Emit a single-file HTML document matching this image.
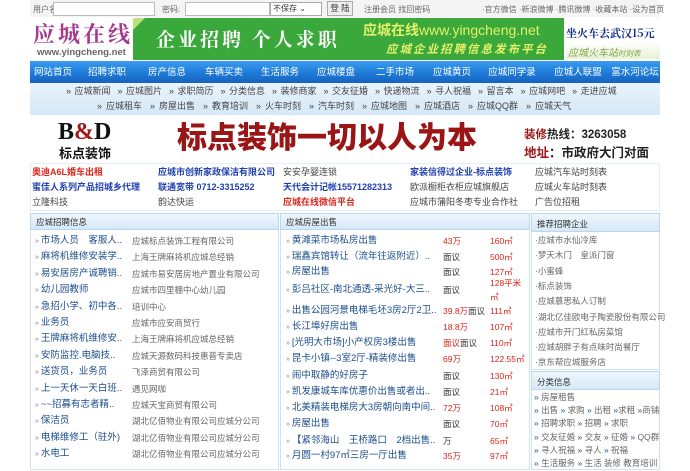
<!DOCTYPE html>
<html><head><meta charset="utf-8"><style>
*{margin:0;padding:0;box-sizing:border-box}
body{width:690px;height:468px;overflow:hidden;background:#fff;font-family:"Liberation Sans","Noto Sans CJK SC",sans-serif;font-size:9px;color:#333;position:relative}
.a{position:absolute;white-space:nowrap}
.bl{color:#1d4e8c}.gr{color:#666}.rd{color:#d9261c}
.row{position:absolute;height:16px;line-height:16px;white-space:nowrap;font-size:9.5px}
.hd{position:absolute;background:linear-gradient(#eef6fd,#d6e8f7);border:1px solid #bcd8ee;height:17px;line-height:16px;font-size:8.5px;color:#333;padding-left:5px}
.box{position:absolute;border:1px solid #cfe2f2;border-top:none}
.nav span{display:inline-block;text-align:center;color:#fff;font-size:9.5px}
</style></head><body>
<div class="a" style="left:30px;top:0;width:630px;height:17px;background:#f4f4f4"></div>
<div class="a gr" style="left:33px;top:4px;font-size:8px">用户名:</div>
<div class="a" style="left:53px;top:2px;width:102px;height:14px;border:1px solid #bbb;background:#fff"></div>
<div class="a gr" style="left:162px;top:4px;font-size:8px">密码:</div>
<div class="a" style="left:185px;top:2px;width:85px;height:14px;border:1px solid #bbb;background:#fff"></div>
<div class="a" style="left:270px;top:2px;width:52px;height:14px;border:1px solid #aaa;background:#fff;font-size:8px;line-height:12px;padding-left:2px">不保存 ⌄</div>
<div class="a" style="left:327px;top:1px;width:26px;height:15px;border:1px solid #aaa;background:#eee;font-size:8.5px;line-height:13px;text-align:center">登 陆</div>
<div class="a gr" style="left:364px;top:4px;font-size:8px">注册会员 找回密码</div>
<div class="a gr" style="left:482px;top:4px;font-size:8px">·官方微信 ·新浪微博 ·腾讯微博 ·收藏本站 ·设为首页</div>
<div class="a" style="left:33px;top:21px;font-family:'Noto Serif CJK SC',serif;font-size:22px;font-weight:bold;color:#a33a8f;letter-spacing:3px;line-height:26px">应城在线</div>
<div class="a" style="left:37px;top:47px;font-size:9.5px;font-weight:bold;color:#666">www.yingcheng.net</div>
<div class="a" style="left:133px;top:18px;width:431px;height:42px;background:#3aa83a"></div>
<div class="a" style="left:133px;top:18px;width:0;height:0;border-left:12px solid #b9e27a;border-bottom:12px solid transparent"></div>
<div class="a" style="left:156px;top:25px;font-family:'Noto Serif CJK SC',serif;font-size:19px;font-weight:bold;color:#fff;letter-spacing:3px">企业招聘 个人求职</div>
<div class="a" style="left:363px;top:20px;font-size:14px;color:#e6f06a"><b>应城在线</b>www.yingcheng.net</div>
<div class="a" style="left:386px;top:41px;font-size:11.5px;color:#e6f06a;font-weight:bold;letter-spacing:2px;font-style:italic">应城企业招聘信息发布平台</div>
<div class="a" style="left:566px;top:25px;font-size:11px;font-weight:bold;color:#152d8c;font-family:'Noto Serif CJK SC',serif">坐火车去武汉15元</div>
<div class="a" style="left:566px;top:42px;width:94px;height:17px;background:linear-gradient(#fff,#e8f2d4)"></div>
<div class="a" style="left:568px;top:44px;font-size:10px;color:#7ea84a;font-style:italic">应城火车站<span style="font-size:7.5px">时刻表</span></div>
<div class="a nav" style="left:30px;top:61px;width:630px;height:22px;background:linear-gradient(#3a9cf0 0%,#1e7ad8 55%,#1663bd 100%);line-height:22px">
<span style="width:46px">网站首页</span><span style="width:62px">招聘求职</span><span style="width:58px">房产信息</span><span style="width:56px">车辆买卖</span><span style="width:56px">生活服务</span><span style="width:56px">应城楼盘</span><span style="width:62px">二手市场</span><span style="width:52px">应城黄页</span><span style="width:68px">应城同学录</span><span style="width:64px">应城人联盟</span><span style="width:50px">富水河论坛</span></div>
<div class="a" style="left:30px;top:83px;width:630px;height:32px;background:linear-gradient(#e9f3fc,#d5e8f7)"></div>
<div class="a" style="left:66px;top:84px;font-size:9px;color:#444;line-height:15px;word-spacing:1px">» 应城新闻 &nbsp;» 应城图片 &nbsp;» 求职简历 &nbsp;» 分类信息 &nbsp;» 装修商家 &nbsp;» 交友征婚 &nbsp;» 快递物流 &nbsp;» 寻人祝福 &nbsp;» 留言本 &nbsp;» 应城网吧 &nbsp;» 走进应城</div>
<div class="a" style="left:97px;top:99px;font-size:9px;color:#444;line-height:15px;word-spacing:1.5px">» 应城租车 &nbsp;» 房屋出售 &nbsp;» 教育培训 &nbsp;» 火车时刻 &nbsp;» 汽车时刻 &nbsp;» 应城地图 &nbsp;» 应城酒店 &nbsp;» 应城QQ群 &nbsp;» 应城天气</div>
<div class="a" style="left:58px;top:120px;font-family:'Liberation Serif',serif;font-size:24px;font-weight:bold;color:#111;line-height:24px">B<span style="color:#a01818">&amp;</span>D</div>
<div class="a" style="left:59px;top:143px;font-size:13px;font-weight:bold;color:#111">标点装饰</div>
<div class="a" style="left:177px;top:119px;font-size:30px;font-weight:900;color:#9a1616;line-height:40px">标点装饰一切以人为本</div>
<div class="a" style="left:524px;top:126px;font-size:11.5px;font-weight:bold;color:#222"><span style="color:#9a1616">装修</span>热线：3263058</div>
<div class="a" style="left:524px;top:142px;font-size:12.5px;font-weight:bold;color:#222"><span style="color:#9a1616">地址</span>：市政府大门对面</div>
<div class="a" style="left:30px;top:163px;width:630px;height:48px;border:1px solid #e3eef7"></div>
<div class="a" style="left:32px;top:165px;line-height:15px;font-size:9px">
<div style="position:absolute;left:0;top:0;color:#d9261c;font-weight:bold">奥迪A6L婚车出租</div>
<div style="position:absolute;left:0;top:15px;color:#1f3fb0;font-weight:bold">蜜佳人系列产品招城乡代理</div>
<div style="position:absolute;left:0;top:30px;color:#444">立隆科技</div>
<div style="position:absolute;left:126px;top:0;color:#1f3fb0;font-weight:bold">应城市创新家政保洁有限公司</div>
<div style="position:absolute;left:126px;top:15px;color:#1f3fb0;font-weight:bold">联通宽带 0712-3315252</div>
<div style="position:absolute;left:126px;top:30px;color:#444">韵达快运</div>
<div style="position:absolute;left:251px;top:0;color:#444">安安孕婴连锁</div>
<div style="position:absolute;left:251px;top:15px;color:#1f3fb0;font-weight:bold">天代会计记帐15571282313</div>
<div style="position:absolute;left:251px;top:30px;color:#d9261c;font-weight:bold">应城在线微信平台</div>
<div style="position:absolute;left:378px;top:0;color:#1f3fb0;font-weight:bold">家装信得过企业-标点装饰</div>
<div style="position:absolute;left:378px;top:15px;color:#444">欧派橱柜衣柜应城旗舰店</div>
<div style="position:absolute;left:378px;top:30px;color:#444">应城市蒲阳冬枣专业合作社</div>
<div style="position:absolute;left:503px;top:0;color:#444">应城汽车站时刻表</div>
<div style="position:absolute;left:503px;top:15px;color:#444">应城火车站时刻表</div>
<div style="position:absolute;left:503px;top:30px;color:#444">广告位招租</div>
</div>
<div class="hd" style="left:30px;top:213px;width:249px">应城招聘信息</div>
<div class="box" style="left:30px;top:230px;width:249px;height:240px"></div>
<div class="hd" style="left:280px;top:213px;width:250px">应城房屋出售</div>
<div class="box" style="left:280px;top:230px;width:250px;height:240px"></div>
<div class="hd" style="left:531px;top:213px;width:129px;height:19px;line-height:20px">推荐招聘企业</div>
<div class="box" style="left:531px;top:232px;width:129px;height:138px"></div>
<div class="hd" style="left:531px;top:371px;width:129px;height:19px;line-height:20px">分类信息</div>
<div class="box" style="left:531px;top:390px;width:129px;height:80px"></div>
<div id="L"></div>
<script>
var L=[["市场人员　客服人..","应城标点装饰工程有限公司"],["麻将机维修安装学..","上海王牌麻将机应城总经销"],["易安居房产诚聘销..","应城市易安居房地产置业有限公司"],["幼儿园教师","应城市四里棚中心幼儿园"],["急招小学、初中各..","培训中心"],["业务员","应城市应安商贸行"],["王牌麻将机维修安..","上海王牌麻将机应城总经销"],["安防监控.电脑技..","应城天源数码科技惠普专卖店"],["送货员，业务员","飞泽商贸有限公司"],["上一天休一天白班..","遇见网咖"],["~~招募有志者精..","应城天宝商贸有限公司"],["保洁员","湖北亿佰物业有限公司应城分公司"],["电梯维修工（驻外)","湖北亿佰物业有限公司应城分公司"],["水电工","湖北亿佰物业有限公司应城分公司"]];
var M=[["黄滩菜市场私房出售","43万","160㎡",241,1],["瑞鑫宾馆转让（流年往返附近）..","面议","500㎡",257],["房屋出售","面议","127㎡",272],["彭吕社区-南北通透-采光好-大三..","面议","128平米<br>㎡",290],["出售公园河景电梯毛坯3房2厅2卫..","39.8万<span style=color:#333>面议</span>","111㎡",311,1],["长江埠好房出售","18.8万","107㎡",327,1],["[光明大市场]小产权房3楼出售","<span style=color:#d9261c>面议</span>面议","110㎡",343],["昆卡小镇--3室2厅-精装修出售","69万","122.55㎡",359,1],["闹中取静的好房子","面议","130㎡",376],["凯发康城车库优惠价出售或者出..","面议","21㎡",392],["北美精装电梯房大3房朝向南中间..","72万","108㎡",408,1],["房屋出售","面议","70㎡",424],["【紧邻海山　王桥路口　2档出售..","万","65㎡",441],["月圆一村97㎡三房一厅出售","35万","97㎡",456,1]];
var R=["应城市水仙冷库","梦天木门　皇派门窗","小蜜蜂","标点装饰","应城慕思私人订制","湖北亿佳欧电子陶瓷股份有限公司","应城市开门红私房菜馆","应城胡胖子有点味时尚餐厅","京东帮应城服务店"];
var F=["» 房屋租售","» 出售 » 求购 » 出租 »求租 »商铺","» 招聘求职 » 招聘 » 求职","» 交友征婚 » 交友 » 征婚 » QQ群","» 寻人祝福 » 寻人 » 祝福","» 生活服务 » 生活 装修 教育培训"];
var h="";
L.forEach(function(r,i){var y=233+i*16.4;h+='<div class="row" style="left:35px;top:'+y+'px"><span style="color:#888;font-size:7px">» </span><span class="bl">'+r[0]+'</span></div><div class="row gr" style="left:132px;top:'+y+'px;font-size:8.5px">'+r[1]+'</div>';});
M.forEach(function(r){var y=r[3]-8;h+='<div class="row" style="left:286px;top:'+y+'px"><span style="color:#888;font-size:7px">» </span><span class="bl">'+r[0]+'</span></div><div class="row" style="left:443px;top:'+y+'px;font-size:8.5px;color:'+(r[4]?'#d9261c':'#333')+'">'+r[1]+'</div>';
 if(r[2].indexOf('<br>')>0)h+='<div class="a rd" style="left:490px;top:'+(y-6)+'px;font-size:8.5px;line-height:14px">'+r[2]+'</div>';else h+='<div class="row rd" style="left:490px;top:'+y+'px;font-size:8.5px">'+r[2]+'</div>';});
R.forEach(function(t,i){h+='<div class="row gr" style="left:535px;top:'+(232+i*15.3)+'px;font-size:8.5px">·'+t+'</div>';});
F.forEach(function(t,i){h+='<div class="row gr" style="left:534px;top:'+(389+i*13.2)+'px;font-size:8.5px">'+t.replace(/»/g,'<span style="color:#1d4e8c">»</span>')+'</div>';});
document.getElementById("L").innerHTML=h;
</script>
</body></html>
